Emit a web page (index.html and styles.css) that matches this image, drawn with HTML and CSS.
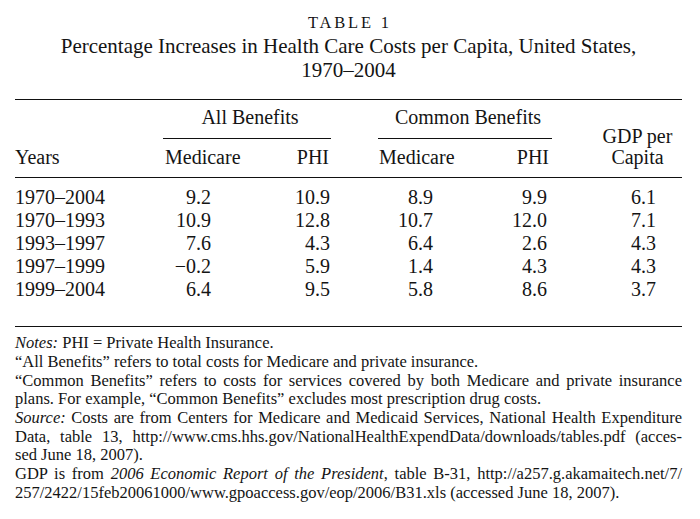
FILE: index.html
```html
<!DOCTYPE html>
<html lang="en">
<head>
<meta charset="utf-8">
<title>Table 1</title>
<link rel="stylesheet" href="styles.css">
</head>
<body>
<div class="page">
  <div class="caption">
    <div class="label">TABLE 1</div>
    <div class="title">Percentage Increases in Health Care Costs per Capita, United States,<br>1970–2004</div>
  </div>
  <div class="table">
    <div class="thead">
      <div class="group all">All Benefits</div>
      <div class="group common">Common Benefits</div>
      <div class="gdp-head">GDP per<br>Capita</div>
      <div class="colhead years">Years</div>
      <div class="colhead a-med">Medicare</div>
      <div class="colhead a-phi">PHI</div>
      <div class="colhead c-med">Medicare</div>
      <div class="colhead c-phi">PHI</div>
    </div>
    <div class="tbody">
      <div class="row"><span class="yr">1970–2004</span><span class="n a-med">9.2</span><span class="n a-phi">10.9</span><span class="sp"></span><span class="n c-med">8.9</span><span class="n c-phi">9.9</span><span class="n gdp">6.1</span></div>
      <div class="row"><span class="yr">1970–1993</span><span class="n a-med">10.9</span><span class="n a-phi">12.8</span><span class="sp"></span><span class="n c-med">10.7</span><span class="n c-phi">12.0</span><span class="n gdp">7.1</span></div>
      <div class="row"><span class="yr">1993–1997</span><span class="n a-med">7.6</span><span class="n a-phi">4.3</span><span class="sp"></span><span class="n c-med">6.4</span><span class="n c-phi">2.6</span><span class="n gdp">4.3</span></div>
      <div class="row"><span class="yr">1997–1999</span><span class="n a-med">−0.2</span><span class="n a-phi">5.9</span><span class="sp"></span><span class="n c-med">1.4</span><span class="n c-phi">4.3</span><span class="n gdp">4.3</span></div>
      <div class="row"><span class="yr">1999–2004</span><span class="n a-med">6.4</span><span class="n a-phi">9.5</span><span class="sp"></span><span class="n c-med">5.8</span><span class="n c-phi">8.6</span><span class="n gdp">3.7</span></div>
    </div>
  </div>
  <div class="notes">
    <p><span class="ln"><em>Notes:</em> PHI = Private Health Insurance.</span></p>
    <p><span class="ln">“All Benefits” refers to total costs for Medicare and private insurance.</span></p>
    <p><span class="ln jl">“Common Benefits” refers to costs for services covered by both Medicare and private insurance</span><span class="ln">plans. For example, “Common Benefits” excludes most prescription drug costs.</span></p>
    <p><span class="ln jl"><em>Source:</em> Costs are from Centers for Medicare and Medicaid Services, National Health Expenditure</span><span class="ln jl">Data, table 13, http://www.cms.hhs.gov/NationalHealthExpendData/downloads/tables.pdf (acces-</span><span class="ln">sed June 18, 2007).</span></p>
    <p><span class="ln jl">GDP is from <em>2006 Economic Report of the President</em>, table B-31, http://a257.g.akamaitech.net/7/</span><span class="ln">257/2422/15feb20061000/www.gpoaccess.gov/eop/2006/B31.xls (accessed June 18, 2007).</span></p>
  </div>
</div>
</body>
</html>
```
FILE: styles.css
```css
html, body {
  margin: 0;
  padding: 0;
  background: #ffffff;
}

body {
  color: #141414;
  font-family: "Liberation Serif", "Times New Roman", serif;
}

.page {
  width: 667px;
  padding: 11px 18px 0 15px;
}

.caption {
  text-align: center;
  margin-bottom: 17px;
}

.label {
  font-size: 16.5px;
  line-height: 23px;
  letter-spacing: 2.8px;
  padding-left: 2.8px;
}

.title {
  font-size: 21px;
  line-height: 24px;
}

.table {
  border-top: 1px solid #111111;
  border-bottom: 1px solid #111111;
  font-size: 20px;
}

.thead,
.row {
  display: grid;
  grid-template-columns: 148px 78px 90px 47px 78px 96px 130px;
}

.thead {
  border-bottom: 1px solid #111111;
}

.group {
  grid-row: 1;
  padding: 5.75px 0 10.25px;
  line-height: 22px;
  text-align: center;
  border-bottom: 1px solid #111111;
}

.group.all {
  grid-column: 2 / 4;
  padding-left: 6px;
}

.group.common {
  grid-column: 5 / 7;
  padding-left: 6px;
}

.gdp-head {
  grid-column: 7;
  grid-row: 1 / 3;
  align-self: end;
  line-height: 21px;
  padding: 0 0 9.25px 41px;
  text-align: center;
}

.colhead {
  grid-row: 2;
  line-height: 21px;
  padding: 7.75px 0 9.25px;
}

.colhead.years { grid-column: 1; }
.colhead.a-med { grid-column: 2; padding-left: 2px; }
.colhead.a-phi { grid-column: 3; text-align: right; padding-right: 2px; }
.colhead.c-med { grid-column: 5; padding-left: 1px; }
.colhead.c-phi { grid-column: 6; text-align: right; padding-right: 3px; }

.tbody {
  padding: 7.75px 0 25.25px;
  line-height: 23px;
}

.n {
  text-align: right;
}

.n.a-med { padding-right: 30px; }
.n.a-phi { padding-right: 1px; }
.n.c-med { padding-right: 23px; }
.n.c-phi { padding-right: 5px; }
.n.gdp { padding-right: 26px; }

.notes {
  padding-top: 7.1px;
  font-size: 16.5px;
  line-height: 18.7px;
}

.notes p {
  margin: 0;
}

.ln {
  display: block;
}

.ln.jl {
  text-align: justify;
  text-align-last: justify;
}
```
